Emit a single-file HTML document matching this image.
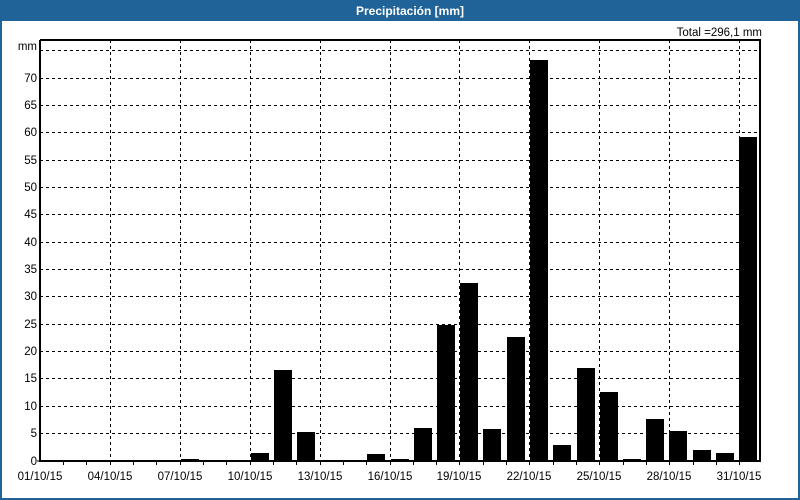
<!DOCTYPE html>
<html><head><meta charset="utf-8"><style>
html,body{margin:0;padding:0;background:#fff;}
body{width:800px;height:500px;overflow:hidden;position:relative;font-family:"Liberation Sans","DejaVu Sans",sans-serif;}
</style></head><body>
<svg width="800" height="500" xmlns="http://www.w3.org/2000/svg" style="position:absolute;left:0;top:0" font-family="Liberation Sans, DejaVu Sans, sans-serif" font-size="11.5">
<rect x="0" y="0" width="800" height="500" fill="#fff"/>
<rect x="0" y="0" width="800" height="21" fill="#1f6398"/>
<rect x="0" y="0" width="2" height="500" fill="#1f6398"/>
<rect x="798" y="0" width="2" height="500" fill="#1f6398"/>
<rect x="0" y="498" width="800" height="2" fill="#1f6398"/>
<text x="410" y="15" text-anchor="middle" fill="#fff" font-weight="bold" font-size="12">Precipitación [mm]</text>
<text x="762" y="36" text-anchor="end" fill="#000">Total =296,1 mm</text>
<g stroke="#000" stroke-width="1" stroke-dasharray="3,3" fill="none">
<path d="M40 433.5H760M40 406.5H760M40 378.5H760M40 351.5H760M40 324.5H760M40 296.5H760M40 269.5H760M40 242.5H760M40 214.5H760M40 187.5H760M40 160.5H760M40 132.5H760M40 105.5H760M40 78.5H760M40 50.5H760"/>
<path d="M110.5 40V461M180.5 40V461M250.5 40V461M320.5 40V461M390.5 40V461M459.5 40V461M529.5 40V461M599.5 40V461M669.5 40V461M739.5 40V461"/>
</g>
<g fill="#000">
<rect x="181" y="459" width="18" height="2"/>
<rect x="251" y="453" width="18" height="8"/>
<rect x="274" y="370" width="18" height="91"/>
<rect x="297" y="432" width="18" height="29"/>
<rect x="367" y="454" width="18" height="7"/>
<rect x="391" y="459" width="18" height="2"/>
<rect x="414" y="428" width="18" height="33"/>
<rect x="437" y="325" width="18" height="136"/>
<rect x="460" y="283" width="18" height="178"/>
<rect x="483" y="429" width="18" height="32"/>
<rect x="507" y="337" width="18" height="124"/>
<rect x="530" y="60" width="18" height="401"/>
<rect x="553" y="445" width="18" height="16"/>
<rect x="577" y="368" width="18" height="93"/>
<rect x="600" y="392" width="18" height="69"/>
<rect x="623" y="459" width="18" height="2"/>
<rect x="646" y="419" width="18" height="42"/>
<rect x="669" y="431" width="18" height="30"/>
<rect x="693" y="450" width="18" height="11"/>
<rect x="716" y="453" width="18" height="8"/>
<rect x="739" y="137" width="18" height="324"/>
</g>
<g stroke="#000" stroke-width="2" fill="none">
<path d="M40 40V461H760V40H40"/>
</g>
<g stroke="#000" stroke-width="1">
<path d="M63.5 461V465M86.5 461V465M110.5 461V465M133.5 461V465M156.5 461V465M180.5 461V465M203.5 461V465M226.5 461V465M250.5 461V465M273.5 461V465M296.5 461V465M320.5 461V465M343.5 461V465M366.5 461V465M390.5 461V465M413.5 461V465M436.5 461V465M459.5 461V465M483.5 461V465M506.5 461V465M529.5 461V465M553.5 461V465M576.5 461V465M599.5 461V465M623.5 461V465M646.5 461V465M669.5 461V465M693.5 461V465M716.5 461V465M739.5 461V465M37 461H40"/>
</g>
<g fill="#000" text-anchor="end">
<text x="37" y="50">mm</text>
<text x="37" y="82">70</text>
<text x="37" y="109">65</text>
<text x="37" y="136">60</text>
<text x="37" y="164">55</text>
<text x="37" y="191">50</text>
<text x="37" y="218">45</text>
<text x="37" y="246">40</text>
<text x="37" y="273">35</text>
<text x="37" y="300">30</text>
<text x="37" y="328">25</text>
<text x="37" y="355">20</text>
<text x="37" y="382">15</text>
<text x="37" y="410">10</text>
<text x="37" y="437">5</text>
<text x="37" y="465">0</text>
</g>
<g fill="#000" text-anchor="middle">
<text x="40" y="480">01/10/15</text>
<text x="110" y="480">04/10/15</text>
<text x="180" y="480">07/10/15</text>
<text x="250" y="480">10/10/15</text>
<text x="320" y="480">13/10/15</text>
<text x="390" y="480">16/10/15</text>
<text x="459" y="480">19/10/15</text>
<text x="529" y="480">22/10/15</text>
<text x="599" y="480">25/10/15</text>
<text x="669" y="480">28/10/15</text>
<text x="739" y="480">31/10/15</text>
</g>
</svg>
</body></html>
